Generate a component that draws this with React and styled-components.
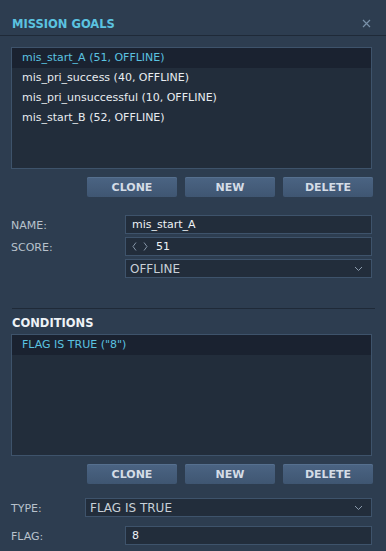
import React from 'react';
import styled, { createGlobalStyle } from 'styled-components';

const GlobalStyle = createGlobalStyle`
	html, body {
		margin: 0;
		padding: 0;
		background: #2d3d50;
	}
	body {
		font-family: "DejaVu Sans", "Liberation Sans", sans-serif;
		font-size: 11px;
		color: #e4e8ec;
	}
`

const goals = [
	'mis_start_A (51, OFFLINE)',
	'mis_pri_success (40, OFFLINE)',
	'mis_pri_unsuccessful (10, OFFLINE)',
	'mis_start_B (52, OFFLINE)'
];

const Chevron = () => (
	<svg width="9" height="6" viewBox="0 0 9 6">
		<path d="M1 1l3.5 3.5L8 1" fill="none" stroke="#8a9aac" strokeWidth="1" />
	</svg>
);

// the little < > stepper in the score box
const Stepper = () => (
	<Arrows width="16" height="9" viewBox="0 0 16 9">
		<path d="M4 0.5L1 4.5l3 4M12 0.5l3 4-3 4" fill="none" stroke="#8494a6" strokeWidth="1" />
	</Arrows>
);

const ButtonBar = () => (
	<Buttons>
		<Button>CLONE</Button>
		<Button>NEW</Button>
		<Button>DELETE</Button>
	</Buttons>
);

const App = () => {
	return (
		<Panel>
			<GlobalStyle />
			<Header>
				<Title>MISSION GOALS</Title>
				<Close viewBox="0 0 9 9" width="9" height="9">
					<path d="M1 1l7 7M8 1L1 8" stroke="#7890a8" strokeWidth="1.2" />
				</Close>
			</Header>
			<Body>
				<List height={122}>
					{goals.map((g, i) => (
						<Row key={g} selected={i === 0}>{g}</Row>
					))}
				</List>
				<ButtonBar />
				<Form>
					<Field>
						<Label>NAME:</Label>
						<Input indent={114}>mis_start_A</Input>
					</Field>
					<Field>
						<Label>SCORE:</Label>
						<Input indent={114}>
							<Stepper />51
						</Input>
					</Field>
					<Field>
						<Label />
						<Input indent={114} select>
							OFFLINE
							<Chevron />
						</Input>
					</Field>
				</Form>
				<Divider />
				<Section>CONDITIONS</Section>
				<List height={122}>
					<Row selected>FLAG IS TRUE ("8")</Row>
				</List>
				<ButtonBar />
				<Form bottom>
					<Field>
						<Label>TYPE:</Label>
						<Input indent={74} select>
							FLAG IS TRUE
							<Chevron />
						</Input>
					</Field>
					<Field gap={9}>
						<Label>FLAG:</Label>
						<Input indent={114}>8</Input>
					</Field>
				</Form>
			</Body>
		</Panel>
	);
}

export default App;

const Panel = styled.div`
	width: 386px;
	height: 551px;
	overflow: hidden;
	background: #2d3d50;
`

const Header = styled.div`
	height: 36px;
	border-bottom: 1px solid #1f2a38;
	display: flex;
	align-items: center;
	justify-content: space-between;
	padding: 12px 15px 0 12px;
	box-sizing: border-box;
`

const Title = styled.div`
	font-weight: bold;
	font-size: 11.5px;
	color: #5bc3e0;
`

const Close = styled.svg`
	margin-top: 0;
`

const Body = styled.div`
	padding: 11px 14px 0 11px;
	display: flex;
	flex-direction: column;
`

const List = styled.div`
	height: ${p => p.height}px;
	background: #222d3b;
	border: 1px solid #3e536b;
	box-sizing: border-box;
`

const Row = styled.div`
	height: 20px;
	line-height: 20px;
	padding-left: 10px;
	color: ${p => p.selected ? '#5bc3e0' : '#e8ecf0'};
	background: ${p => p.selected ? '#1a2230' : 'transparent'};
`

const Buttons = styled.div`
	display: flex;
	justify-content: flex-end;
	gap: 8px;
	margin-top: 8px;
	margin-right: -1px;
`

const Button = styled.button`
	width: 90px;
	height: 20px;
	padding: 0;
	border: none;
	border-radius: 2px;
	background: linear-gradient(#4b6483, #3f5672);
	box-shadow: inset 0 1px 0 #56708f;
	color: #d4dce6;
	font-family: "DejaVu Sans", sans-serif;
	font-weight: bold;
	font-size: 11px;
`

const Form = styled.div`
	display: flex;
	flex-direction: column;
	gap: 3px;
	margin-top: ${p => p.bottom ? '14px' : '18px'};
`

const Field = styled.div`
	display: flex;
	align-items: center;
	margin-top: ${p => p.gap ? p.gap - 3 : 0}px;
`

const Label = styled.div`
	width: 0;
	white-space: nowrap;
	color: #b8c2cc;
	padding-top: 2px;
`

const Input = styled.div`
	margin-left: ${p => p.indent}px;
	flex: 1;
	height: 19px;
	box-sizing: border-box;
	background: #222d3b;
	border: 1px solid #3e536b;
	display: flex;
	align-items: center;
	justify-content: ${p => p.select ? 'space-between' : 'flex-start'};
	padding: 0 8px 0 ${p => p.select ? 4 : 6}px;
	color: ${p => p.select ? '#c8d0d8' : '#eef2f6'};
	font-size: ${p => p.select ? '12px' : '11px'};
`

const Arrows = styled.svg`
	margin: 0 8px 0 0;
`

const Divider = styled.div`
	height: 1px;
	background: #1f2a38;
	margin: 30px -3px 0 1px;
`

const Section = styled.div`
	font-weight: bold;
	font-size: 11.5px;
	color: #eef2f6;
	margin: 7px 0 4px 1px;
`
